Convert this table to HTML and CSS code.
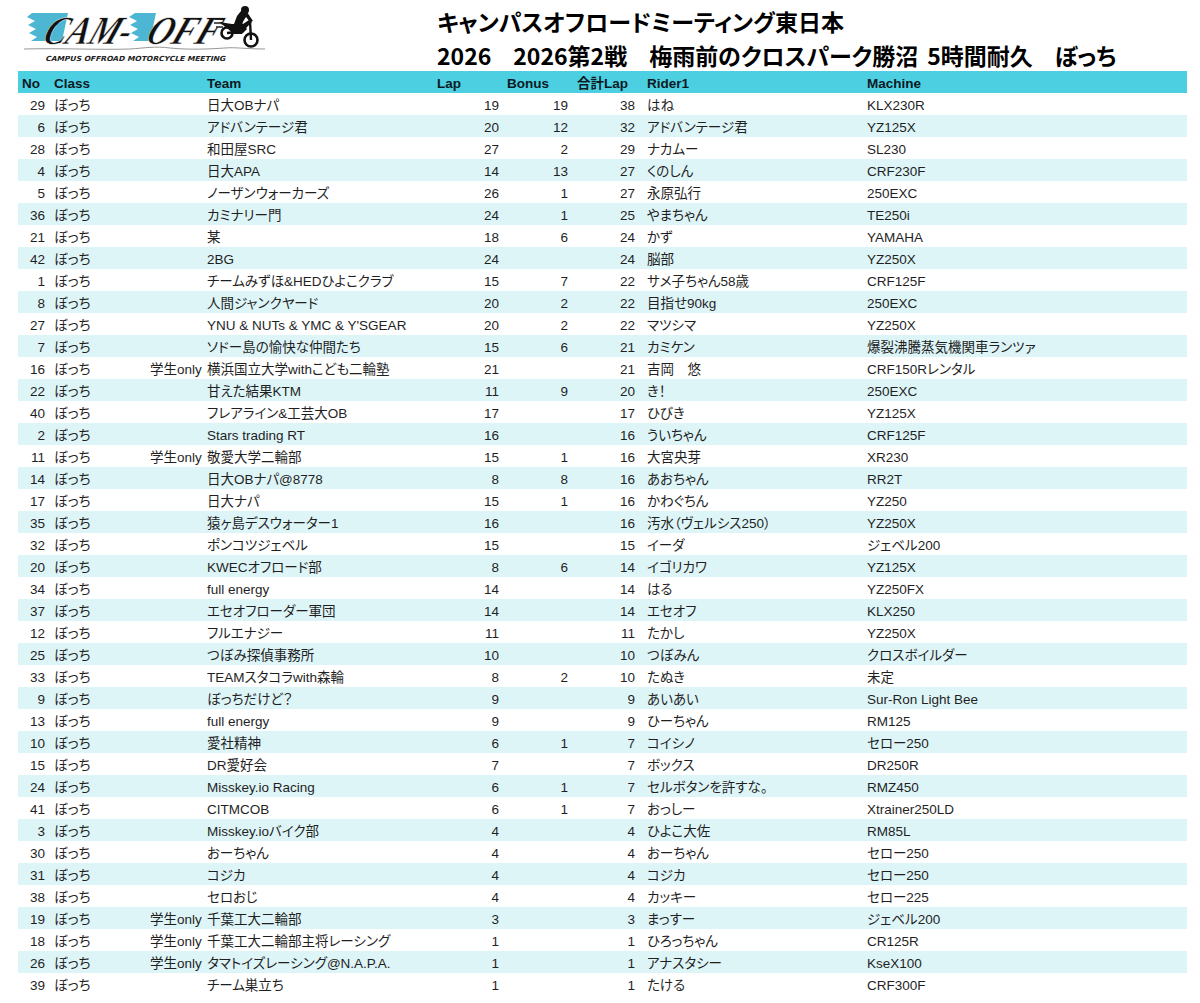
FILE: index.html
```html
<!DOCTYPE html>
<html lang="ja">
<head>
<meta charset="utf-8">
<title>CAM-OFF Results</title>
<link rel="stylesheet" href="styles.css">
</head>
<body>
<header class="top">
  <div class="logo">
    <svg width="250" height="66" viewBox="0 0 250 66" xmlns="http://www.w3.org/2000/svg">
      <polygon class="cyan" points="12,11 48,11 42,39 11,39 17,35 9,31 16,27 8,23 15,19 7,15"/>
      <polygon class="cyan" points="115,11 136,11 130,39 113,39 119,35 111,31 118,27 110,23 117,19 109,15"/>
      <g transform="translate(0,0) skewX(-22)">
        <text class="brand" x="38" y="42" textLength="86" lengthAdjust="spacingAndGlyphs">CAM-</text>
        <text class="brand" x="141" y="42" textLength="72" lengthAdjust="spacingAndGlyphs">OFF</text>
      </g>
      <g class="bike">
        <line x1="195" y1="17" x2="203" y2="17"/>
        <line x1="194" y1="21" x2="202" y2="21"/>
        <line x1="196" y1="25" x2="203" y2="25"/>
        <circle cx="207" cy="31" r="5.5" class="wheel"/>
        <circle cx="231" cy="38" r="6.5" class="wheel"/>
        <polygon class="solid" points="199,20 212,22 223,22 229,18 232,20 226,26 222,32 214,32 208,27"/>
        <line x1="230" y1="19" x2="231" y2="38" class="fork"/>
        <line x1="207" y1="31" x2="217" y2="30" class="fork"/>
        <polygon class="solid" points="214,22 217,14 221,9 227,10 231,16 233,19 230,20 226,15 224,18 222,22"/>
        <polygon class="solid" points="216,21 222,21 227,27 223,31 219,27"/>
        <circle cx="225" cy="8" r="4" class="solid"/>
      </g>
      <path class="ground" d="M4,47 C40,46 80,48 110,47 C125,46 135,44 150,46 C170,48 190,47 205,46 C215,45 225,47 245,47"/>
      <g transform="skewX(-15)">
        <text class="tag" x="41" y="59" textLength="180" lengthAdjust="spacingAndGlyphs">CAMPUS OFFROAD MOTORCYCLE MEETING</text>
      </g>
    </svg>
  </div>
  <div class="title">
    <div class="title-line">キャンパスオフロードミーティング東日本</div>
    <div class="title-line"><span class="seg">2026</span><span class="seg">2026第2戦</span><span class="seg seg-tight">梅雨前のクロスパーク勝沼</span><span class="seg">5時間耐久</span><span>ぼっち</span></div>
  </div>
</header>

<table class="results">
  <colgroup>
    <col class="c-no"><col class="c-class"><col class="c-sub"><col class="c-team"><col class="c-lap"><col class="c-bonus"><col class="c-total"><col class="c-rider"><col class="c-machine">
  </colgroup>
  <thead>
    <tr>
      <th class="h-no">No</th>
      <th class="h-class" colspan="2">Class</th>
      <th class="h-team">Team</th>
      <th class="h-lap">Lap</th>
      <th class="h-bonus">Bonus</th>
      <th class="h-total">合計Lap</th>
      <th class="h-rider">Rider1</th>
      <th class="h-machine">Machine</th>
    </tr>
  </thead>
  <tbody>
    <tr><td class="no">29</td><td class="cls">ぼっち</td><td class="sub"></td><td class="team">日大OBナパ</td><td class="num lap">19</td><td class="num bonus">19</td><td class="num total">38</td><td class="rider">はね</td><td class="machine">KLX230R</td></tr>
    <tr><td class="no">6</td><td class="cls">ぼっち</td><td class="sub"></td><td class="team">アドバンテージ君</td><td class="num lap">20</td><td class="num bonus">12</td><td class="num total">32</td><td class="rider">アドバンテージ君</td><td class="machine">YZ125X</td></tr>
    <tr><td class="no">28</td><td class="cls">ぼっち</td><td class="sub"></td><td class="team">和田屋SRC</td><td class="num lap">27</td><td class="num bonus">2</td><td class="num total">29</td><td class="rider">ナカムー</td><td class="machine">SL230</td></tr>
    <tr><td class="no">4</td><td class="cls">ぼっち</td><td class="sub"></td><td class="team">日大APA</td><td class="num lap">14</td><td class="num bonus">13</td><td class="num total">27</td><td class="rider">くのしん</td><td class="machine">CRF230F</td></tr>
    <tr><td class="no">5</td><td class="cls">ぼっち</td><td class="sub"></td><td class="team">ノーザンウォーカーズ</td><td class="num lap">26</td><td class="num bonus">1</td><td class="num total">27</td><td class="rider">永原弘行</td><td class="machine">250EXC</td></tr>
    <tr><td class="no">36</td><td class="cls">ぼっち</td><td class="sub"></td><td class="team">カミナリー門</td><td class="num lap">24</td><td class="num bonus">1</td><td class="num total">25</td><td class="rider">やまちゃん</td><td class="machine">TE250i</td></tr>
    <tr><td class="no">21</td><td class="cls">ぼっち</td><td class="sub"></td><td class="team">某</td><td class="num lap">18</td><td class="num bonus">6</td><td class="num total">24</td><td class="rider">かず</td><td class="machine">YAMAHA</td></tr>
    <tr><td class="no">42</td><td class="cls">ぼっち</td><td class="sub"></td><td class="team">2BG</td><td class="num lap">24</td><td class="num bonus"></td><td class="num total">24</td><td class="rider">脳部</td><td class="machine">YZ250X</td></tr>
    <tr><td class="no">1</td><td class="cls">ぼっち</td><td class="sub"></td><td class="team">チームみずほ&amp;HEDひよこクラブ</td><td class="num lap">15</td><td class="num bonus">7</td><td class="num total">22</td><td class="rider">サメ子ちゃん58歳</td><td class="machine">CRF125F</td></tr>
    <tr><td class="no">8</td><td class="cls">ぼっち</td><td class="sub"></td><td class="team">人間ジャンクヤード</td><td class="num lap">20</td><td class="num bonus">2</td><td class="num total">22</td><td class="rider">目指せ90kg</td><td class="machine">250EXC</td></tr>
    <tr><td class="no">27</td><td class="cls">ぼっち</td><td class="sub"></td><td class="team">YNU &amp; NUTs &amp; YMC &amp; Y'SGEAR</td><td class="num lap">20</td><td class="num bonus">2</td><td class="num total">22</td><td class="rider">マツシマ</td><td class="machine">YZ250X</td></tr>
    <tr><td class="no">7</td><td class="cls">ぼっち</td><td class="sub"></td><td class="team">ソドー島の愉快な仲間たち</td><td class="num lap">15</td><td class="num bonus">6</td><td class="num total">21</td><td class="rider">カミケン</td><td class="machine">爆裂沸騰蒸気機関車ランツァ</td></tr>
    <tr><td class="no">16</td><td class="cls">ぼっち</td><td class="sub">学生only</td><td class="team">横浜国立大学withこども二輪塾</td><td class="num lap">21</td><td class="num bonus"></td><td class="num total">21</td><td class="rider">吉岡　悠</td><td class="machine">CRF150Rレンタル</td></tr>
    <tr><td class="no">22</td><td class="cls">ぼっち</td><td class="sub"></td><td class="team">甘えた結果KTM</td><td class="num lap">11</td><td class="num bonus">9</td><td class="num total">20</td><td class="rider">き！</td><td class="machine">250EXC</td></tr>
    <tr><td class="no">40</td><td class="cls">ぼっち</td><td class="sub"></td><td class="team">フレアライン&amp;工芸大OB</td><td class="num lap">17</td><td class="num bonus"></td><td class="num total">17</td><td class="rider">ひびき</td><td class="machine">YZ125X</td></tr>
    <tr><td class="no">2</td><td class="cls">ぼっち</td><td class="sub"></td><td class="team">Stars trading RT</td><td class="num lap">16</td><td class="num bonus"></td><td class="num total">16</td><td class="rider">ういちゃん</td><td class="machine">CRF125F</td></tr>
    <tr><td class="no">11</td><td class="cls">ぼっち</td><td class="sub">学生only</td><td class="team">敬愛大学二輪部</td><td class="num lap">15</td><td class="num bonus">1</td><td class="num total">16</td><td class="rider">大宮央芽</td><td class="machine">XR230</td></tr>
    <tr><td class="no">14</td><td class="cls">ぼっち</td><td class="sub"></td><td class="team">日大OBナパ@8778</td><td class="num lap">8</td><td class="num bonus">8</td><td class="num total">16</td><td class="rider">あおちゃん</td><td class="machine">RR2T</td></tr>
    <tr><td class="no">17</td><td class="cls">ぼっち</td><td class="sub"></td><td class="team">日大ナパ</td><td class="num lap">15</td><td class="num bonus">1</td><td class="num total">16</td><td class="rider">かわぐちん</td><td class="machine">YZ250</td></tr>
    <tr><td class="no">35</td><td class="cls">ぼっち</td><td class="sub"></td><td class="team">猿ヶ島デスウォーター1</td><td class="num lap">16</td><td class="num bonus"></td><td class="num total">16</td><td class="rider">汚水（ヴェルシス250）</td><td class="machine">YZ250X</td></tr>
    <tr><td class="no">32</td><td class="cls">ぼっち</td><td class="sub"></td><td class="team">ポンコツジェベル</td><td class="num lap">15</td><td class="num bonus"></td><td class="num total">15</td><td class="rider">イーダ</td><td class="machine">ジェベル200</td></tr>
    <tr><td class="no">20</td><td class="cls">ぼっち</td><td class="sub"></td><td class="team">KWECオフロード部</td><td class="num lap">8</td><td class="num bonus">6</td><td class="num total">14</td><td class="rider">イゴリカワ</td><td class="machine">YZ125X</td></tr>
    <tr><td class="no">34</td><td class="cls">ぼっち</td><td class="sub"></td><td class="team">full energy</td><td class="num lap">14</td><td class="num bonus"></td><td class="num total">14</td><td class="rider">はる</td><td class="machine">YZ250FX</td></tr>
    <tr><td class="no">37</td><td class="cls">ぼっち</td><td class="sub"></td><td class="team">エセオフローダー軍団</td><td class="num lap">14</td><td class="num bonus"></td><td class="num total">14</td><td class="rider">エセオフ</td><td class="machine">KLX250</td></tr>
    <tr><td class="no">12</td><td class="cls">ぼっち</td><td class="sub"></td><td class="team">フルエナジー</td><td class="num lap">11</td><td class="num bonus"></td><td class="num total">11</td><td class="rider">たかし</td><td class="machine">YZ250X</td></tr>
    <tr><td class="no">25</td><td class="cls">ぼっち</td><td class="sub"></td><td class="team">つぼみ探偵事務所</td><td class="num lap">10</td><td class="num bonus"></td><td class="num total">10</td><td class="rider">つぼみん</td><td class="machine">クロスボイルダー</td></tr>
    <tr><td class="no">33</td><td class="cls">ぼっち</td><td class="sub"></td><td class="team">TEAMスタコラwith森輪</td><td class="num lap">8</td><td class="num bonus">2</td><td class="num total">10</td><td class="rider">たぬき</td><td class="machine">未定</td></tr>
    <tr><td class="no">9</td><td class="cls">ぼっち</td><td class="sub"></td><td class="team">ぼっちだけど？</td><td class="num lap">9</td><td class="num bonus"></td><td class="num total">9</td><td class="rider">あいあい</td><td class="machine">Sur-Ron Light Bee</td></tr>
    <tr><td class="no">13</td><td class="cls">ぼっち</td><td class="sub"></td><td class="team">full energy</td><td class="num lap">9</td><td class="num bonus"></td><td class="num total">9</td><td class="rider">ひーちゃん</td><td class="machine">RM125</td></tr>
    <tr><td class="no">10</td><td class="cls">ぼっち</td><td class="sub"></td><td class="team">愛社精神</td><td class="num lap">6</td><td class="num bonus">1</td><td class="num total">7</td><td class="rider">コイシノ</td><td class="machine">セロー250</td></tr>
    <tr><td class="no">15</td><td class="cls">ぼっち</td><td class="sub"></td><td class="team">DR愛好会</td><td class="num lap">7</td><td class="num bonus"></td><td class="num total">7</td><td class="rider">ボックス</td><td class="machine">DR250R</td></tr>
    <tr><td class="no">24</td><td class="cls">ぼっち</td><td class="sub"></td><td class="team">Misskey.io Racing</td><td class="num lap">6</td><td class="num bonus">1</td><td class="num total">7</td><td class="rider">セルボタンを許すな。</td><td class="machine">RMZ450</td></tr>
    <tr><td class="no">41</td><td class="cls">ぼっち</td><td class="sub"></td><td class="team">CITMCOB</td><td class="num lap">6</td><td class="num bonus">1</td><td class="num total">7</td><td class="rider">おっしー</td><td class="machine">Xtrainer250LD</td></tr>
    <tr><td class="no">3</td><td class="cls">ぼっち</td><td class="sub"></td><td class="team">Misskey.ioバイク部</td><td class="num lap">4</td><td class="num bonus"></td><td class="num total">4</td><td class="rider">ひよこ大佐</td><td class="machine">RM85L</td></tr>
    <tr><td class="no">30</td><td class="cls">ぼっち</td><td class="sub"></td><td class="team">おーちゃん</td><td class="num lap">4</td><td class="num bonus"></td><td class="num total">4</td><td class="rider">おーちゃん</td><td class="machine">セロー250</td></tr>
    <tr><td class="no">31</td><td class="cls">ぼっち</td><td class="sub"></td><td class="team">コジカ</td><td class="num lap">4</td><td class="num bonus"></td><td class="num total">4</td><td class="rider">コジカ</td><td class="machine">セロー250</td></tr>
    <tr><td class="no">38</td><td class="cls">ぼっち</td><td class="sub"></td><td class="team">セロおじ</td><td class="num lap">4</td><td class="num bonus"></td><td class="num total">4</td><td class="rider">カッキー</td><td class="machine">セロー225</td></tr>
    <tr><td class="no">19</td><td class="cls">ぼっち</td><td class="sub">学生only</td><td class="team">千葉工大二輪部</td><td class="num lap">3</td><td class="num bonus"></td><td class="num total">3</td><td class="rider">まっすー</td><td class="machine">ジェベル200</td></tr>
    <tr><td class="no">18</td><td class="cls">ぼっち</td><td class="sub">学生only</td><td class="team">千葉工大二輪部主将レーシング</td><td class="num lap">1</td><td class="num bonus"></td><td class="num total">1</td><td class="rider">ひろっちゃん</td><td class="machine">CR125R</td></tr>
    <tr><td class="no">26</td><td class="cls">ぼっち</td><td class="sub">学生only</td><td class="team">タマトイズレーシング@N.A.P.A.</td><td class="num lap">1</td><td class="num bonus"></td><td class="num total">1</td><td class="rider">アナスタシー</td><td class="machine">KseX100</td></tr>
    <tr><td class="no">39</td><td class="cls">ぼっち</td><td class="sub"></td><td class="team">チーム巣立ち</td><td class="num lap">1</td><td class="num bonus"></td><td class="num total">1</td><td class="rider">たける</td><td class="machine">CRF300F</td></tr>
  </tbody>
</table>
</body>
</html>
```

FILE: styles.css
```css
html, body {
  margin: 0;
  padding: 0;
  background: #ffffff;
}

body {
  font-family: "Liberation Sans", "Noto Sans CJK JP", sans-serif;
  color: #1f1f1f;
}

.top {
  display: flex;
  height: 71px;
}

.logo {
  width: 437px;
  flex: none;
  padding: 2px 0 0 20px;
  box-sizing: border-box;
}

.logo svg {
  display: block;
}

.cyan {
  fill: #4cb6d3;
}

.brand {
  font-family: "Liberation Serif", serif;
  font-weight: bold;
  font-style: italic;
  font-size: 40px;
  fill: #111111;
  stroke: #ffffff;
  stroke-width: 0.5;
}

.bike line {
  stroke: #111111;
  stroke-width: 1.4;
}

.bike .fork {
  stroke-width: 2.4;
}

.bike .wheel {
  fill: none;
  stroke: #111111;
  stroke-width: 2.6;
}

.bike .solid {
  fill: #111111;
}

.ground {
  fill: none;
  stroke: #8a8a8a;
  stroke-width: 0.9;
}

.tag {
  font-family: "DejaVu Sans", sans-serif;
  font-weight: bold;
  font-size: 7px;
  fill: #222222;
}

.title {
  padding-top: 4px;
  font-family: "Noto Sans CJK JP", sans-serif;
  font-weight: 700;
  font-size: 23px;
  line-height: 34px;
  color: #000000;
  font-feature-settings: "palt";
  white-space: nowrap;
}

.title-line {
  display: flex;
}

.seg {
  margin-right: 22px;
}

.seg-tight {
  margin-right: 9px;
}

.results {
  margin-left: 18px;
  width: 1169px;
  border-collapse: collapse;
  table-layout: fixed;
  font-size: 13.5px;
  font-feature-settings: "palt";
}

.c-no { width: 32px; }
.c-class { width: 100px; }
.c-sub { width: 52px; }
.c-team { width: 230px; }
.c-lap { width: 72px; }
.c-bonus { width: 69px; }
.c-total { width: 68px; }
.c-rider { width: 221px; }
.c-machine { width: 325px; }

.results tr {
  height: 22px;
}

.results th,
.results td {
  padding: 3px 0 0 0;
  line-height: 17px;
  white-space: nowrap;
  overflow: hidden;
  vertical-align: middle;
}

.results th {
  background: #4ccfe0;
  text-align: left;
  font-weight: bold;
  color: #0c1a24;
}

.results tbody tr:nth-child(even) td {
  background: #def5f8;
}

.results th.h-no { padding-left: 4px; }
.results th.h-class { padding-left: 4px; }
.results th.h-team { padding-left: 5px; }
.results th.h-lap { padding-left: 5px; }
.results th.h-bonus { padding-left: 3px; }
.results th.h-total { padding-left: 4px; }
.results th.h-rider { padding-left: 6px; }
.results th.h-machine { padding-left: 5px; }

.results td.no { text-align: right; padding-right: 5px; }
.results td.cls { padding-left: 4px; }
.results td.sub { text-align: right; padding-right: 5px; }
.results td.team { padding-left: 5px; }
.results td.num { text-align: right; padding-right: 5px; }
.results td.total { padding-right: 6px; }
.results td.rider { padding-left: 6px; }
.results td.machine { padding-left: 5px; }
```
